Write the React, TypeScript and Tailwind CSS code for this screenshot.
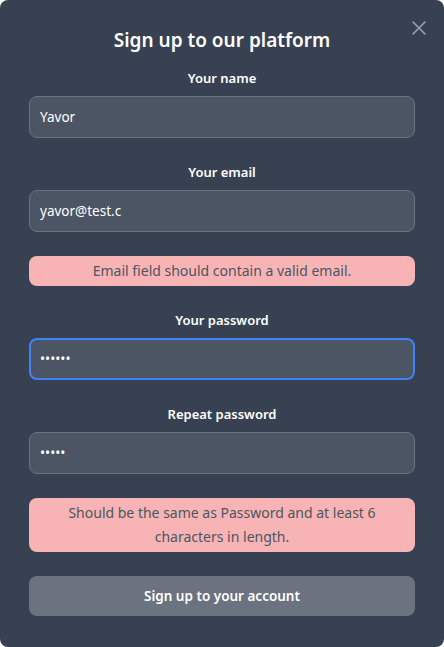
import { useState } from "react";

const font = { fontFamily: '"Noto Sans", "Open Sans", sans-serif' };

function Field({ label, value, type = "text", focused = false }: { label: string; value: string; type?: string; focused?: boolean }) {
  return (
    <div>
      <label className="block mb-2 text-[13px] font-semibold text-white text-center leading-5">{label}</label>
      <input
        type={type}
        defaultValue={value}
        readOnly
        className={`block w-full h-[42px] px-2.5 text-[13.5px] text-white bg-[#4b5563] rounded-lg outline-none ${
          focused ? "border-2 border-[#3f83f8] px-[9px]" : "border border-[#6b7280]"
        }`}
      />
    </div>
  );
}

function ErrorBox({ children }: { children: React.ReactNode }) {
  return (
    <div className="bg-[#f8b4b4] text-[#4b5563] rounded-lg text-center text-[14px] leading-6 py-[3px] px-8">
      {children}
    </div>
  );
}

export default function App() {
  const [open] = useState(true);
  if (!open) return null;
  return (
    <div className="w-[444px] h-[647px] bg-white" style={font}>
      <div className="relative w-full h-[647px] bg-[#374151] rounded-lg px-[29px] pt-[26px]">
        <button className="absolute top-[19px] right-[16px] text-[#9ca3af]" aria-label="Close">
          <svg width="18" height="18" viewBox="0 0 18 18" fill="none" stroke="currentColor" strokeWidth="1.6" strokeLinecap="round">
            <path d="M3 3l12 12M15 3L3 15" />
          </svg>
        </button>
        <h3 className="text-[19px] font-semibold text-white text-center leading-7 mb-[14px]">Sign up to our platform</h3>
        <form className="space-y-6">
          <Field label="Your name" value="Yavor" />
          <Field label="Your email" value="yavor@test.c" />
          <ErrorBox>Email field should contain a valid email.</ErrorBox>
          <Field label="Your password" value="123456" type="password" focused />
          <Field label="Repeat password" value="12345" type="password" />
          <ErrorBox>Should be the same as Password and at least 6 characters in length.</ErrorBox>
          <button type="button" className="w-full h-10 rounded-lg bg-[#6b7280] text-white text-[13.5px] font-semibold">
            Sign up to your account
          </button>
        </form>
      </div>
    </div>
  );
}
